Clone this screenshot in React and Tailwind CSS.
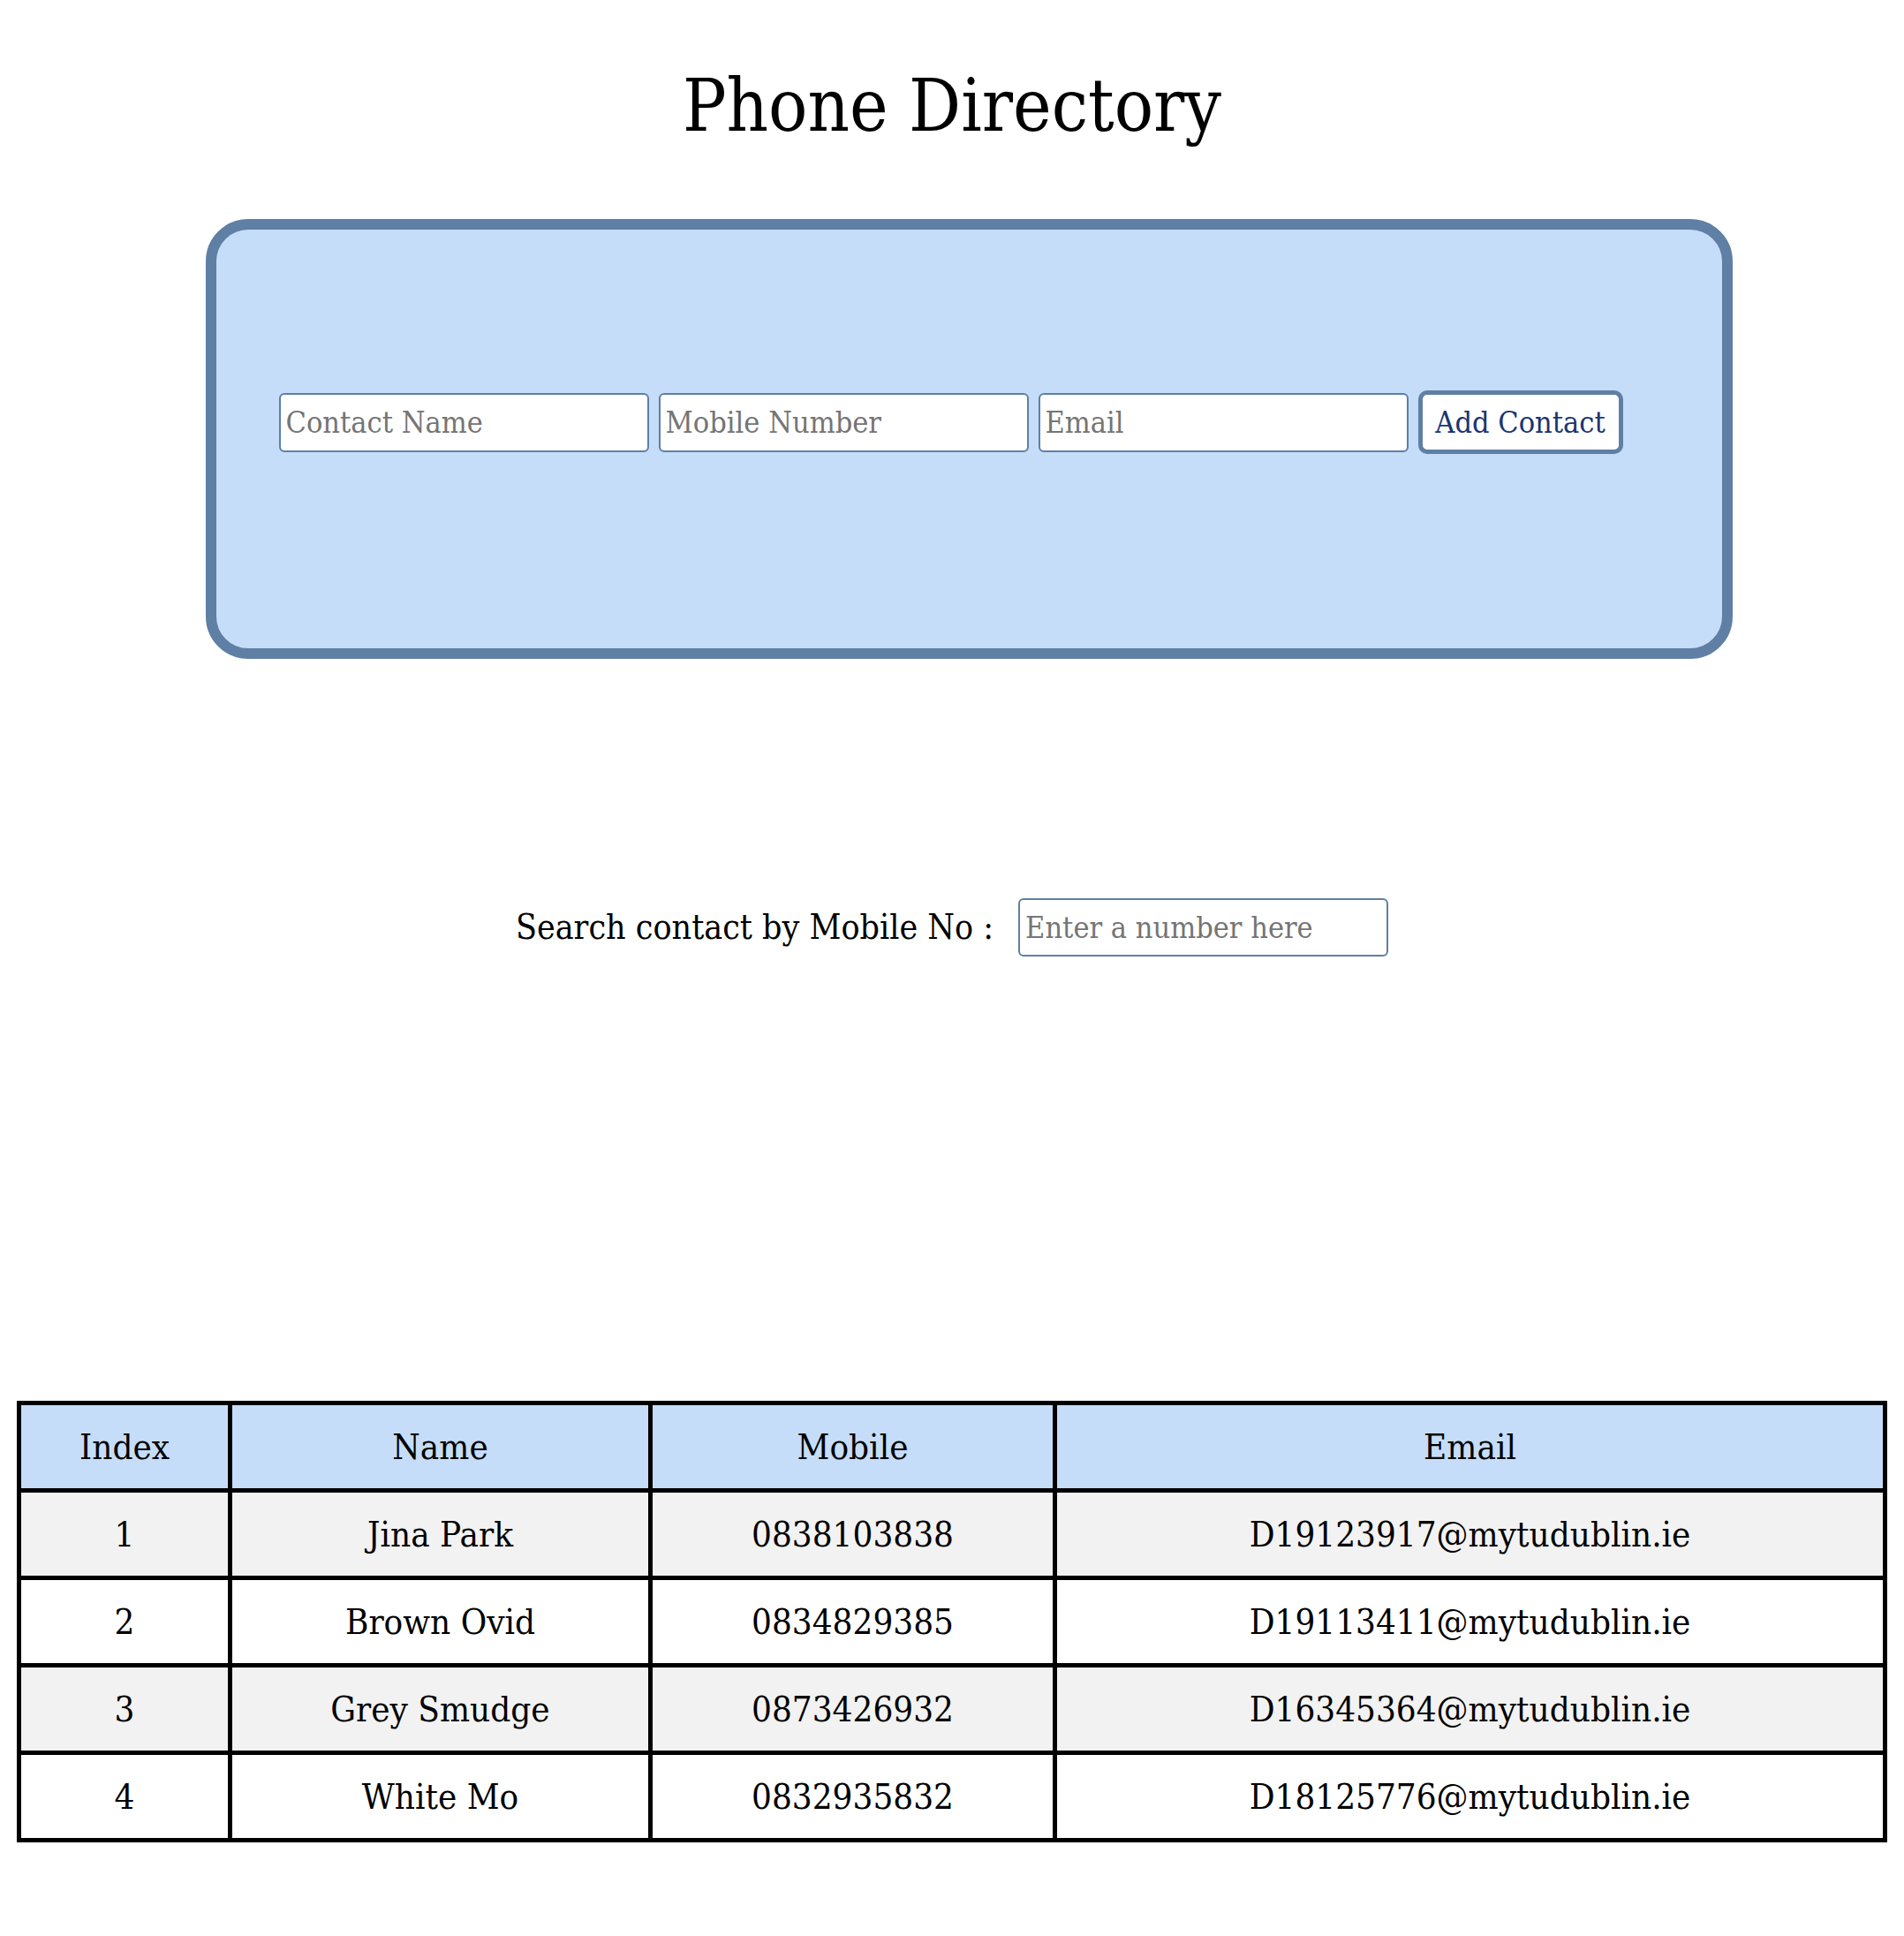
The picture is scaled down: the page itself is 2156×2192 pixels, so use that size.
import React, { useState } from 'react';

const initialContacts = [
    { name: 'Jina Park', mobile: '0838103838', email: 'D19123917@mytudublin.ie' },
    { name: 'Brown Ovid', mobile: '0834829385', email: 'D19113411@mytudublin.ie' },
    { name: 'Grey Smudge', mobile: '0873426932', email: 'D16345364@mytudublin.ie' },
    { name: 'White Mo', mobile: '0832935832', email: 'D18125776@mytudublin.ie' },
];

export default function App() {
    const [contacts, setContacts] = useState(initialContacts);
    const [name, setName] = useState('');
    const [mobile, setMobile] = useState('');
    const [email, setEmail] = useState('');
    const [search, setSearch] = useState('');

    const handleAdd = () => {
        if (!name || !mobile || !email) return;
        setContacts([...contacts, { name, mobile, email }]);
        setName('');
        setMobile('');
        setEmail('');
    };

    const shown = contacts.filter((c) => c.mobile.includes(search));

    const inputCls =
        'w-[419px] h-[67px] bg-white border-2 border-[#5f7fa5] rounded-[6px] px-[6px] text-[34px] outline-none placeholder:text-[#757575]';

    return (
        <div className="min-h-screen bg-white text-black font-['DejaVu_Serif_Condensed','DejaVu_Serif',serif] flex flex-col items-center">
            <h1 className="mt-[65px] text-[82px] leading-[110px] text-center">Phone Directory</h1>

            {/* form card */}
            <div className="mt-[73px] ml-[38px] w-[1729px] h-[498px] bg-[#c5ddf9] border-[12px] border-[#5f7fa5] rounded-[48px] pl-[71px] pt-[182px]">
                <div className="flex items-center gap-[11px]">
                    <input className={inputCls} placeholder="Contact Name" value={name} onChange={(e) => setName(e.target.value)} />
                    <input className={inputCls} placeholder="Mobile Number" value={mobile} onChange={(e) => setMobile(e.target.value)} />
                    <input className={inputCls} placeholder="Email" value={email} onChange={(e) => setEmail(e.target.value)} />
                    <button
                        onClick={handleAdd}
                        className="w-[232px] h-[72px] bg-white border-[5px] border-[#5f7fa5] rounded-[10px] text-[34px] text-[#1a3572]"
                    >
                        Add Contact
                    </button>
                </div>
            </div>

            {/* search */}
            <div className="mt-[271px] flex items-center gap-[28px]">
                <span className="text-[39px]">Search contact by Mobile No :</span>
                <input
                    className="w-[419px] h-[66px] bg-white border-2 border-[#5f7fa5] rounded-[6px] px-[6px] text-[34px] outline-none placeholder:text-[#757575]"
                    placeholder="Enter a number here"
                    value={search}
                    onChange={(e) => setSearch(e.target.value)}
                />
            </div>

            {/* table */}
            <table className="mt-[503px] w-[2118px] border-collapse border-[5px] border-black text-[40px]">
                <thead className="bg-[#c5ddf9]">
                    <tr className="h-[99px]">
                        <th className="w-[239px] border-[5px] border-black font-normal">Index</th>
                        <th className="w-[476px] border-[5px] border-black font-normal">Name</th>
                        <th className="w-[458px] border-[5px] border-black font-normal">Mobile</th>
                        <th className="border-[5px] border-black font-normal">Email</th>
                    </tr>
                </thead>
                <tbody>
                    {shown.map((c, i) => (
                        <tr key={c.mobile} className={`h-[99px] text-center ${i % 2 === 0 ? 'bg-[#f2f2f2]' : 'bg-white'}`}>
                            <td className="border-[5px] border-black">{i + 1}</td>
                            <td className="border-[5px] border-black">{c.name}</td>
                            <td className="border-[5px] border-black">{c.mobile}</td>
                            <td className="border-[5px] border-black">{c.email}</td>
                        </tr>
                    ))}
                </tbody>
            </table>
        </div>
    );
}
